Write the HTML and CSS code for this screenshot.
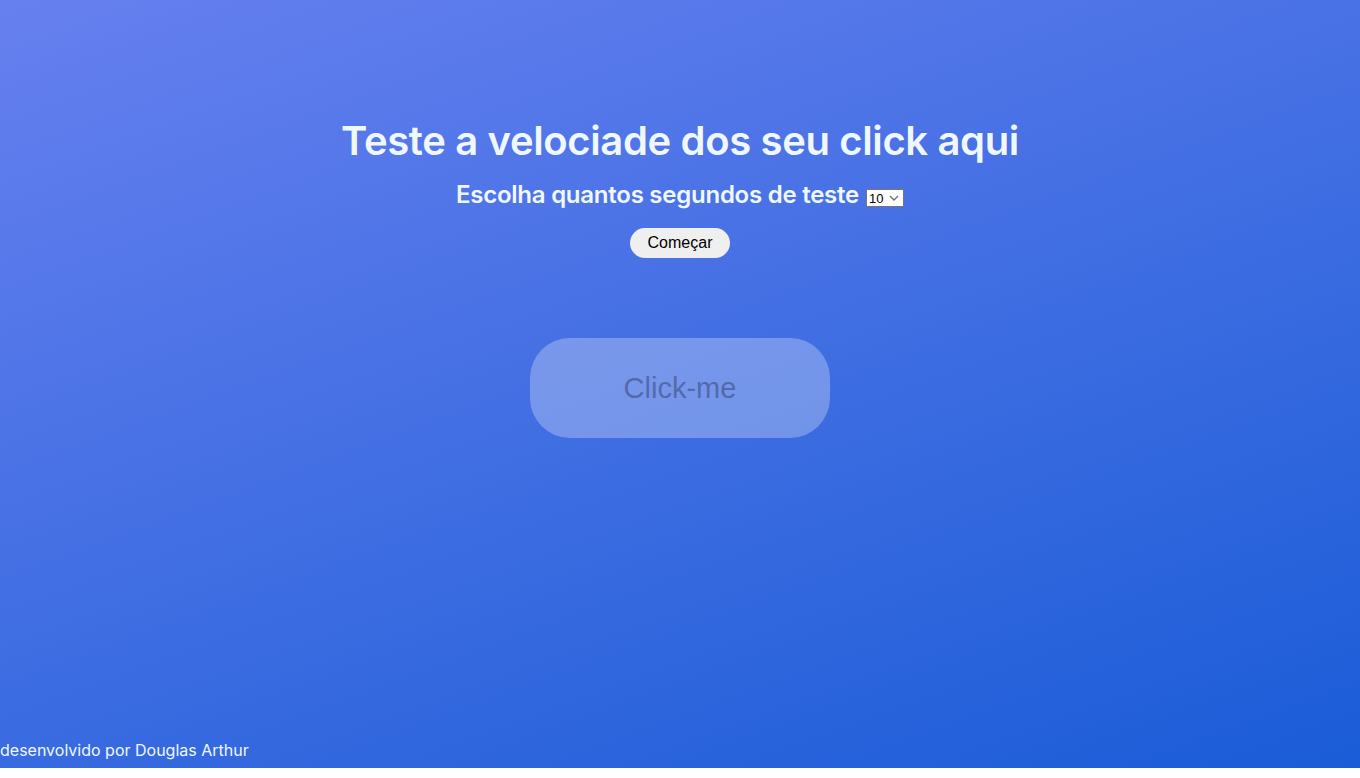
FILE: index.html
```html
<!DOCTYPE html>
<html lang="pt-BR">
<head>
<meta charset="utf-8">
<title>Teste de click</title>
<link rel="stylesheet" href="styles.css">
</head>
<body>
<div class="page">
  <main class="content">
    <h1 class="title">Teste a velociade dos seu click aqui</h1>
    <h2 class="subtitle">Escolha quantos segundos de teste
      <span class="select-wrap">
        <select class="secs"><option>10</option><option>5</option><option>30</option></select>
        <svg class="chev" width="10" height="6" viewBox="0 0 10 6"><path d="M1 1 L5 5 L9 1" fill="none" stroke="#6d6d6d" stroke-width="1.3"/></svg>
      </span>
    </h2>
    <button class="start">Começar</button>
    <button class="clicker" disabled>Click-me</button>
  </main>
  <footer class="footer">desenvolvido por Douglas Arthur</footer>
</div>
</body>
</html>
```
FILE: styles.css
```css
html, body {
  margin: 0;
  padding: 0;
  background: #fff;
}
.page {
  height: 768px;
  display: flex;
  flex-direction: column;
  background: linear-gradient(160deg, #6780ef 0%, #1a5cd7 100%);
  font-family: Inter, "Liberation Sans", sans-serif;
  color: #f0f8ff;
}
.content {
  flex: 1;
  display: flex;
  flex-direction: column;
  align-items: center;
  padding-top: 114px;
}
.title {
  margin: 0;
  font-size: 40px;
  font-weight: 600;
  line-height: 54px;
  letter-spacing: -0.36px;
}
.subtitle {
  margin: 12px 0 0;
  font-size: 24px;
  font-weight: 600;
  line-height: 30px;
  letter-spacing: -0.25px;
  display: flex;
  align-items: center;
  gap: 7px;
}
.select-wrap {
  position: relative;
  display: inline-flex;
  margin-top: 6px;
}
.secs {
  appearance: none;
  -webkit-appearance: none;
  width: 38px;
  height: 18px;
  font-family: "Liberation Sans", Arial, sans-serif;
  font-size: 13px;
  padding: 0 0 0 2px;
  border: 1px solid #767676;
  border-radius: 0;
  background: #fff;
  color: #000;
  letter-spacing: 0;
}
.chev {
  position: absolute;
  right: 5px;
  top: 6px;
  pointer-events: none;
}
.start {
  margin-top: 18px;
  width: 100px;
  height: 30px;
  border: none;
  border-radius: 15px;
  background: #efefef;
  font-family: "Liberation Sans", Arial, sans-serif;
  font-size: 16px;
  color: #000;
}
.clicker {
  margin-top: 80px;
  width: 300px;
  height: 100px;
  border: none;
  border-radius: 40px;
  background: rgba(255, 255, 255, 0.28);
  font-family: "Liberation Sans", Arial, sans-serif;
  font-size: 29px;
  color: rgba(60, 75, 130, 0.6);
}
.footer {
  font-size: 16px;
  line-height: 20px;
  padding-bottom: 8px;
}
```
